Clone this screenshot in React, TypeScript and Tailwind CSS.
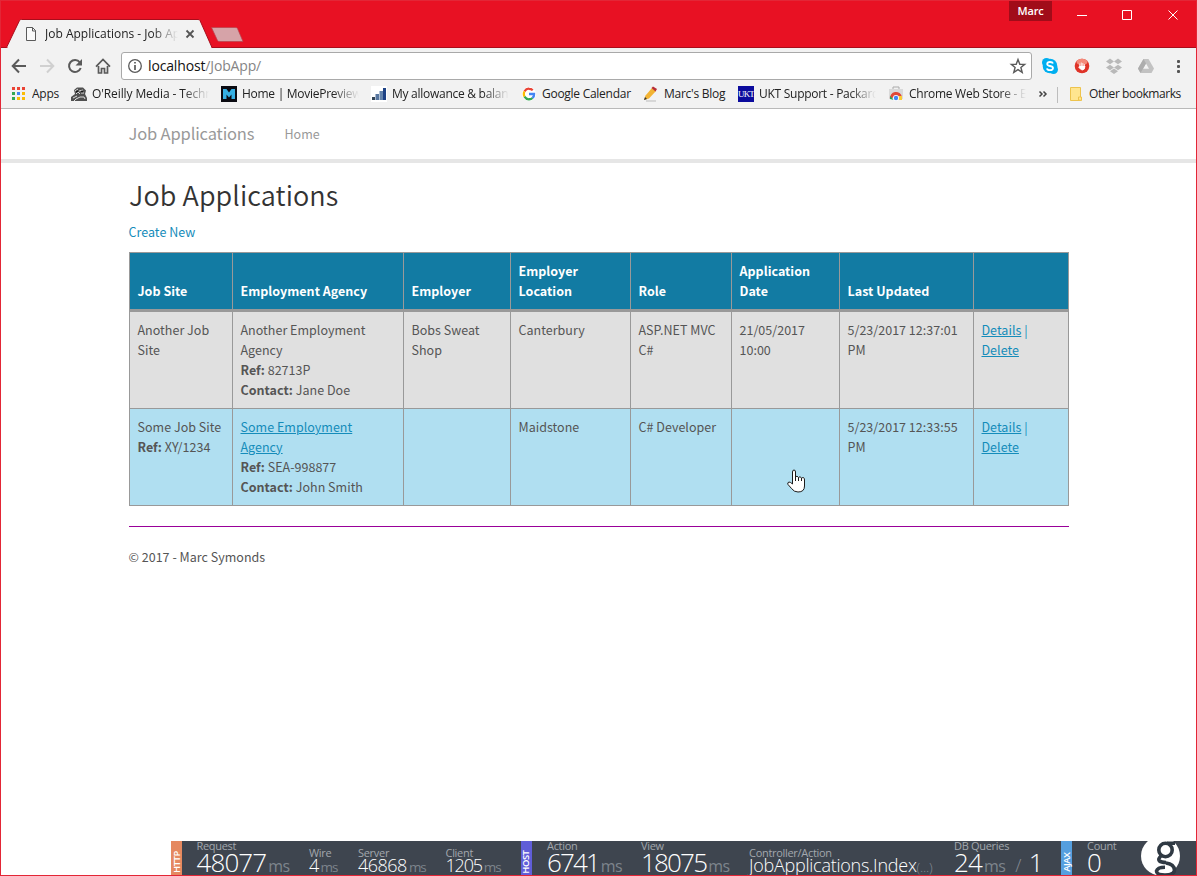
import React from "react";

type Kids = { children?: React.ReactNode };

const fade = "[mask-image:linear-gradient(to_right,#000_calc(100%_-_26px),transparent)]";

function Bookmark({ icon, label, w, lw, ls = "", faded = false }: { icon: React.ReactNode; label: string; w: string; lw: string; ls?: string; faded?: boolean }) {
  return (
    <div className={`flex h-full shrink-0 items-center ${w}`}>
      <span className="mb-px mr-[5px] flex h-4 w-4 shrink-0 items-center justify-center">{icon}</span>
      <span className={`mb-[2px] overflow-hidden whitespace-nowrap ${lw} ${ls} ${faded ? fade : ""}`}>{label}</span>
    </div>
  );
}

function TabStrip() {
  return (
    <header className="flex h-[48px] shrink-0 bg-[#e81123]">
      <svg width="250" height="48" viewBox="0 0 250 48" className="absolute left-0 top-0">
        <path d="M0 47.5H6.5L19.5 20.5Q20 19.500 21.500 19.500H198Q199.500 19.500 200 20.500L212 47.500H250" fill="#f2f2f2" stroke="#a90d1b" />
        <rect x="8" y="47" width="203" height="1" fill="#f2f2f2" />
        <path d="M211.500 27.500H235Q237 27.500 237.500 28.500L243 41.500H220Q218 41.500 217.500 40.500Z" fill="#d6a3a8" stroke="#b9404b" strokeWidth=".7" />
        <path d="M26.500 27.500H32.500L35.500 30.500V40.500H26.500ZM32.500 27.500V31H36" fill="#fafafa" stroke="#5a5a5a" />
        <path d="M186.500 30.500L193.500 37.500M193.500 30.500L186.500 37.500" stroke="#555" strokeWidth="1.800" />
      </svg>
      <div className={`relative ml-[45px] mt-[25px] h-[18px] w-[133px] overflow-hidden whitespace-nowrap text-[12px] leading-[18px] text-[#222] ${fade}`}>Job Applications - Job Applications</div>
      <div className="flex-1" />
      <div className="mr-[25px] mt-px h-5 w-[43px] bg-[#a10c19] text-center text-[11px] font-semibold leading-[20px] tracking-[-0.2px] text-white">Marc</div>
      <svg width="120" height="30" viewBox="1077 0 120 30" fill="none" stroke="#fff">
        <path d="M1077 15.500H1087M1122.500 10.500H1131.500V19.500H1122.500ZM1168.500 10.500L1177.500 19.500M1177.500 10.500L1168.500 19.500" />
      </svg>
      <div className="absolute right-0 top-[47px] h-px w-[950px] bg-[#a90d1b]" />
    </header>
  );
}

function Toolbar() {
  return (
    <div className="flex h-[33px] shrink-0 items-end bg-[#f2f2f2]">
      <svg width="121" height="33" viewBox="0 48 121 33" fill="none" stroke="#5a5a5a" strokeWidth="2">
        <path d="M26 66H13M19 59.500L12.700 66L19 72.500" />
        <path d="M40 66H53M47 59.500L53.300 66L47 72.500" stroke="#d0d0d0" />
        <path d="M79.800 62.300A6 6 0 1 0 80.700 68" />
        <path d="M82 59V65.500H75.500Z" fill="#5a5a5a" stroke="none" />
        <path d="M96 66.700L103 59.500L110 66.700M98.500 66V73H101.500V68.500H104.500V73H107.500V66" strokeWidth="1.700" />
      </svg>
      <div className="mb-px flex h-[28px] w-[911px] items-center rounded-[3px] border border-[#a9a9a9] bg-white">
        <svg width="26" height="26" viewBox="0 0 26 26" fill="none" stroke="#5a5a5a">
          <circle cx="13" cy="13" r="6.300" strokeWidth="1.300" />
          <path d="M13 9V10.600M13 12V17" strokeWidth="1.700" />
        </svg>
        <span className="flex-1 text-[14px] leading-[20px] tracking-[-0.15px] text-[#111]">localhost<span className="text-[#858585]">/JobApp/</span></span>
        <svg width="26" height="26" viewBox="0 0 26 26" fill="none" stroke="#5a5a5a" strokeWidth="1.400">
          <path d="M13 6.500L14.800 11.200L19.700 11.400L15.900 14.500L17.200 19.400L13 16.600L8.800 19.400L10.100 14.500L6.300 11.400L11.200 11.200Z" />
        </svg>
      </div>
      <svg width="164" height="33" viewBox="1032 48 164 33">
        <g fill="#00aff0"><circle cx="1050" cy="66" r="7.300" /><circle cx="1046.500" cy="62.500" r="4.500" /><circle cx="1053.500" cy="69.500" r="4.500" /></g>
        <path d="M1053 63.500Q1052.500 62 1050 62Q1047.200 62 1047.200 64Q1047.200 65.500 1050 66Q1053 66.600 1053 68Q1053 70.200 1050 70.200Q1047.300 70.200 1047 68.300" fill="none" stroke="#fff" strokeWidth="1.800" />
        <circle cx="1082" cy="66" r="7.300" fill="#df3328" /><ellipse cx="1082" cy="62" rx="5.500" ry="3.200" fill="#f48a7a" />
        <path d="M1079.800 66.500V63.500M1081.300 66.500V62.500M1082.800 66.500V63M1084.300 66.500V64M1079.500 66H1085Q1085 70 1082.300 70Q1080.800 70 1078.500 67" stroke="#fff" strokeWidth=".8" fill="#fff" />
        <path d="M1110 58.500L1114 61.500L1110 64.200L1106 61.500ZM1118 58.500L1122 61.500L1118 64.200L1114 61.500ZM1110 64.800L1114 67.500L1110 70.200L1106 67.500ZM1118 64.800L1122 67.500L1118 70.200L1114 67.500ZM1114 68.500L1118 71.200L1114 74L1110 71.200Z" fill="#b9b9b9" />
        <path d="M1143.500 59H1148.500L1154 68.500L1151.500 73H1140.500L1138 68.500Z" fill="#c2c2c2" />
        <path d="M1146 63.500L1143 68.800H1149Z" fill="#f2f2f2" /><path d="M1143.500 59L1138 68.500L1140.500 73L1146 63.500Z" fill="#adadad" />
        <g fill="#555"><rect x="1177" y="60" width="3" height="3" rx="1" /><rect x="1177" y="65" width="3" height="3" rx="1" /><rect x="1177" y="70" width="3" height="3" rx="1" /></g>
      </svg>
    </div>
  );
}

const appDots = ["#ea4335", "#ea4335", "#ea4335", "#34a853", "#4285f4", "#fbbc05", "#34a853", "#fbbc05", "#fbbc05"];

function Bookmarks() {
  return (
    <div className="flex h-[28px] shrink-0 items-center border-b border-[#b9b9b9] bg-[#f2f2f2] pl-[11px] text-[12px] leading-[18px] tracking-[-0.27px] text-[#222]">
      <Bookmark w="w-[60px]" lw="w-[30px]" label="Apps" icon={<svg width="16" height="16">{appDots.map((c, i) => <rect key={i} x={1 + (i % 3) * 5} y={1 + Math.floor(i / 3) * 5} width="3" height="3" fill={c} />)}</svg>} />
      <Bookmark w="w-[150px]" lw="w-[117px]" ls="tracking-[-0.1px]" faded label="O'Reilly Media - Technology Books" icon={<svg width="16" height="16" viewBox="0 0 16 16"><path d="M3 4L6 1.500H12L15 4.500L14 8L16 12V15H0V11L4 8Z" fill="#505050" /><path d="M4 5L7 3M8 5L12 4M5 8L7 6L9 8M10 7H13M2 12L6 10M5 13L9 11H13L14 13M3 15L5 13" stroke="#ddd" fill="none" /><circle cx="6" cy="5.500" r="1" fill="#111" /><circle cx="11" cy="5.500" r="1" fill="#111" /></svg>} />
      <Bookmark w="w-[150px]" lw="w-[117px]" faded label="Home | MoviePreviews" icon={<svg width="16" height="16"><rect width="16" height="16" fill="#0b0b12" /><path d="M2 13V3H5.500L8 6.500L10.500 3H14V13H10.500V8.500L8 11.500L5.500 8.500V13Z" fill="#36b0e4" /></svg>} />
      <Bookmark w="w-[150px]" lw="w-[117px]" faded label="My allowance & balance" icon={<svg width="16" height="16"><rect width="16" height="16" fill="#fff" /><rect x="1" y="11" width="3" height="3" fill="#345" /><rect x="4.500" y="8" width="3.500" height="6" fill="#56759f" /><rect x="8.500" y="5" width="3.500" height="9" fill="#6383ab" /><rect x="12" y="2" width="3" height="12" fill="#1d4285" /></svg>} />
      <Bookmark w="w-[122px]" lw="w-[100px]" label="Google Calendar" icon={<svg width="14" height="14" viewBox="0 0 16 16" fill="none" strokeWidth="2.600"><circle cx="8" cy="8" r="8" fill="#fff" /><path d="M2.800 5Q5 1.700 8.200 2Q10.500 2 12.300 3.700" stroke="#ea4335" /><path d="M2.800 5Q1.400 8 2.800 11" stroke="#fbbc05" /><path d="M2.800 11Q5 14.300 8.200 14Q10.500 14 12 12.600" stroke="#34a853" /><path d="M12 12.600Q14 10.500 13.800 8H8" stroke="#4285f4" /></svg>} />
      <Bookmark w="w-[95px]" lw="w-[70px]" label="Marc's Blog" icon={<svg width="16" height="16" viewBox="0 0 16 16"><path d="M3 15H13" stroke="#bbb" /><path d="M1 14L2.500 9.500L9 2L13 5L6 12.500Z" fill="#f2b333" /><path d="M8.500 2L10 .5L14 3L12.500 5.500Z" fill="#b82c35" /><path d="M1 14L2 11L4 13Z" fill="#333" /></svg>} />
      <Bookmark w="w-[150px]" lw="w-[117px]" faded label="UKT Support - Packard Bell" icon={<span className="flex h-4 w-4 items-center justify-center bg-[#0b0b9d] font-['Liberation_Serif',serif] text-[9px] tracking-[-0.9px] text-white">UKT</span>} />
      <Bookmark w="w-[149px]" lw="w-[117px]" faded label="Chrome Web Store - Extensions" icon={<svg width="16" height="16" viewBox="0 0 16 16"><path d="M5 3V1H11V3" fill="none" stroke="#aaa" /><rect x="1" y="3" width="14" height="10" fill="#d9d9d9" /><path d="M2 13A6 6 0 0 1 14 11L8 10Z" fill="#e04736" /><path d="M2 13L2 10L6 14Z" fill="#28a55b" /><path d="M10 14L11 10H14V14Z" fill="#fbcb35" /><circle cx="8" cy="12" r="3" fill="#fff" /><circle cx="8" cy="12" r="2.200" fill="#4285f4" /></svg>} />
      <svg width="20" height="20" viewBox="0 0 20 20" fill="none" stroke="#444" strokeWidth="1.500"><path d="M2.500 6.500L5 9L2.500 11.500M6.500 6.500L9 9L6.500 11.500" /></svg>
      <span className="h-[16px] w-px bg-[#bdbdbd]" />
      <svg width="31" height="20" viewBox="0 0 31 20"><path d="M12.500 2.500H22.500V15.500H12.500Z" fill="#ffe58f" stroke="#edc34d" /><path d="M20.500 15V12H23.500V15.500Z" fill="#ffe58f" stroke="#edc34d" /></svg>
      <span className="mb-[2px] whitespace-nowrap tracking-[-0.45px]">Other bookmarks</span>
    </div>
  );
}

const Cell = ({ children }: Kids) => <td className="h-[97px] border border-[#999] px-[7.5px] py-[8px] align-top">{children}</td>;
const Link = ({ children }: Kids) => <a className="text-[#158cba] underline underline-offset-1">{children}</a>;
const columns = ["Job Site", "Employment Agency", "Employer", "Employer Location", "Role", "Application Date", "Last Updated", ""];
const Actions = () => <span className="text-[#158cba]"><Link>Details</Link> |<br /><Link>Delete</Link></span>;

function Page() {
  return (
    <main className="flex-1 bg-white font-['Noto_Sans_CJK_SC','Noto_Sans',sans-serif] text-[12.5px] leading-[20px] tracking-[0.02px] text-[#555]">
      <nav className="flex h-[54px] items-center border-b-4 border-[#e6e6e6] pb-[2px] pl-[128.500px] text-[#999]">
        <span className="w-[156px] text-[16.500px] tracking-[-0.15px]">Job Applications</span>
        <span className="pt-[2px]">Home</span>
      </nav>
      <div className="ml-[129px] w-[940px]">
        <h1 className="h-[59px] pt-[16px] text-[27px] font-[350] leading-[32px] tracking-[0.1px] text-[#333]">Job Applications</h1>
        <p className="-ml-[0.5px] h-[30px] text-[#158cba]">Create New</p>
        <table className="w-[940px] table-fixed border-collapse border border-[#999]">
          <colgroup><col className="w-[103px]" /><col className="w-[171px]" /><col className="w-[107px]" /><col className="w-[120px]" /><col className="w-[101px]" /><col className="w-[108px]" /><col className="w-[134px]" /><col className="w-[95px]" /></colgroup>
          <thead><tr className="h-[58px] bg-[#127ba3] text-left text-white">{columns.map((c, i) => <th key={i} className="border border-b-[3px] border-[#999] px-[7.5px] py-[8px] align-bottom font-bold">{c}</th>)}</tr></thead>
          <tbody>
            <tr className="bg-[#e0e0e0]">
              <Cell>Another Job Site</Cell>
              <Cell>Another Employment Agency<br /><b>Ref:</b> 82713P<br /><b>Contact:</b> Jane Doe</Cell>
              <Cell>Bobs Sweat Shop</Cell><Cell>Canterbury</Cell><Cell>ASP.NET MVC C#</Cell><Cell>21/05/2017 10:00</Cell><Cell>5/23/2017 12:37:01 PM</Cell><Cell><Actions /></Cell>
            </tr>
            <tr className="bg-[#b0dff1]">
              <Cell>Some Job Site<br /><b>Ref:</b> XY/1234</Cell>
              <Cell><Link>Some Employment<br />Agency</Link><br /><b>Ref:</b> SEA-998877<br /><b>Contact:</b> John Smith</Cell>
              <Cell /><Cell>Maidstone</Cell><Cell>C# Developer</Cell><Cell /><Cell>5/23/2017 12:33:55 PM</Cell><Cell><Actions /></Cell>
            </tr>
          </tbody>
        </table>
        <hr className="mt-5 border-t border-[#909]" />
        <footer className="-ml-[0.5px] pt-[20px]">© 2017 - Marc Symonds</footer>
      </div>
    </main>
  );
}

function Metric({ label, value, unit, w, big = false, extra, ls = "" }: { label: string; value: string; unit?: string; w: string; big?: boolean; extra?: React.ReactNode; ls?: string }) {
  return (
    <div className={`flex h-[34px] shrink-0 flex-col justify-end whitespace-nowrap ${w}`}>
      <span className={`text-[11px] leading-[10px] tracking-[-0.3px] text-[#a2a7ad] ${big ? "" : "-mb-[2px]"}`}>{label}</span>
      <span className={`flex items-baseline font-light text-white ${big ? "mb-[1px] h-[23px] text-[26px] leading-[23px]" : "h-[19px] text-[18px] leading-[19px]"} ${ls}`}>
        <span>{value}</span>{unit && <span className={`ml-[2px] font-normal text-[#7d848c] ${big ? "text-[16px] tracking-[-0.6px]" : "text-[13.5px] tracking-[-1px]"}`}>{unit}</span>}{extra}
      </span>
    </div>
  );
}

const Section = ({ children, bg }: Kids & { bg: string }) => (
  <div className={`flex h-full w-[11px] shrink-0 items-center justify-center text-[9.5px] font-semibold text-white ${bg}`}><span className="mt-[9px] -rotate-90 tracking-[-0.5px]">{children}</span></div>
);

function Hud() {
  return (
    <footer className="absolute bottom-px right-px flex h-[34px] w-[1025px] overflow-hidden bg-[#3e454f]">
      <Section bg="bg-[#e58960]">HTTP</Section>
      <Metric big label="Request" value="48077" unit="ms" w="ml-[14.500px] w-[112.500px]" ls="tracking-[-0.9px]" />
      <Metric label="Wire" value="4" unit="ms" w="w-[49px]" ls="tracking-[-0.8px]" />
      <Metric label="Server" value="46868" unit="ms" w="w-[87.5px]" ls="tracking-[-0.5px]" />
      <Metric label="Client" value="1205" unit="ms" w="w-[75.5px]" ls="tracking-[-1.2px]" />
      <Section bg="bg-[#605ed8]">HOST</Section>
      <Metric big label="Action" value="6741" unit="ms" w="ml-[15px] w-[94px]" ls="tracking-[-1.9px]" />
      <Metric big label="View" value="18075" unit="ms" w="w-[108px]" ls="tracking-[-1.8px]" />
      <Metric label="Controller/Action" value="JobApplications.Index" w="w-[205px]" ls="tracking-[-0.25px]" extra={<span className="text-[13.5px] text-[#858c94]">(...)</span>} />
      <Metric big label="DB Queries" value="24" unit="ms" w="w-[107px]" ls="tracking-[-0.8px]" extra={<><span className="ml-[10px] text-[18px] text-[#858c94]">/</span><span className="ml-[8px]">1</span></>} />
      <Section bg="bg-[#559fdf]">AJAX</Section>
      <Metric big label="Count" value="0" w="ml-[15px] w-[54px]" />
      <svg width="40" height="34" viewBox="0 0 40 34" className="shrink-0">
        <circle cx="19.500" cy="15" r="19.500" fill="#fff" />
        <g fill="none" stroke="#2f3943" strokeWidth="3.600"><circle cx="24.500" cy="9" r="6.700" /><path d="M26 2.300H34M20.500 14.500Q16.500 18 18.500 20Q20 21.200 25 21.500M24 26.200Q16.500 26.200 15.500 30Q15.500 34 24 34Q33.500 34 33.500 29Q33 23 25 22" /></g>
      </svg>
    </footer>
  );
}

export default function App() {
  return (
    <div className="relative flex h-[876px] w-[1197px] flex-col overflow-hidden font-['Open_Sans','Noto_Sans',sans-serif]">
      <TabStrip /><Toolbar /><Bookmarks /><Page /><Hud />
      <svg width="18" height="24" viewBox="0 0 18 24" className="absolute left-[787px] top-[469px]">
        <path d="M5.500 15V3Q5.500 1 7 1Q8.500 1 8.500 3V8Q10 6 11.500 8.500Q13 6.700 14.500 9Q17.500 7.500 17.500 11V17Q17.500 23 11 23Q7 23 4.500 19.500L1 15.500Q0 13.500 2 13Q3.500 13 5.500 15ZM8.500 8V12M11.500 8.500V12M14.500 9V12" fill="#fff" stroke="#1b1b1b" />
      </svg>
      <div className="pointer-events-none absolute inset-0 border border-[#e32636]" />
    </div>
  );
}
